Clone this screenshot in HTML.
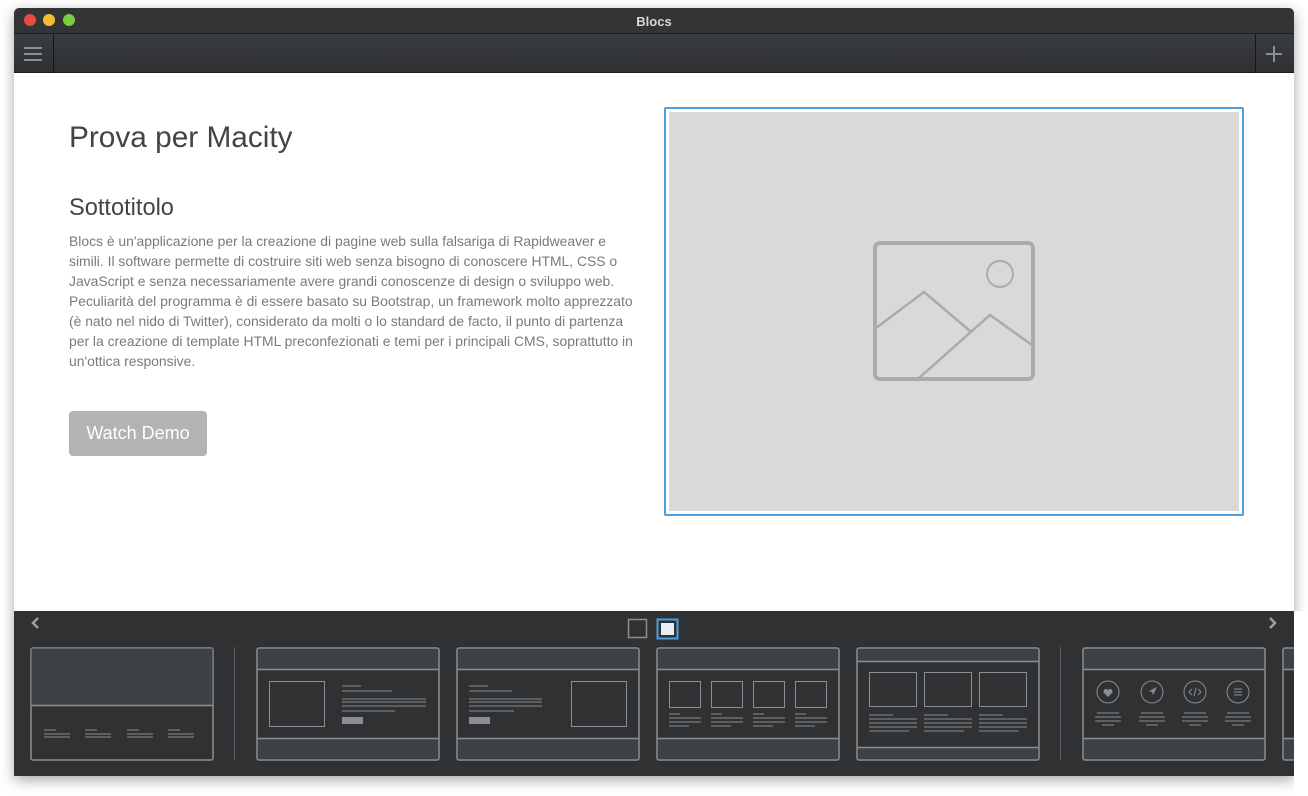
<!DOCTYPE html>
<html><head><meta charset="utf-8"><style>
*{margin:0;padding:0;box-sizing:border-box}
body{width:1308px;height:796px;background:#fff;position:relative;overflow:hidden;font-family:"Liberation Sans",Arial,sans-serif}
.abs{position:absolute}
</style></head><body>
<div class="abs" style="left:14px;top:8px;width:1280px;height:768px;box-shadow:0 4px 14px rgba(0,0,0,.35);border-radius:5px 5px 0 0;background:#fff"></div>
<div class="abs" style="left:14px;top:8px;width:1280px;height:26px;background:#323435;border-radius:5px 5px 0 0;border-bottom:1px solid #1d1e1f"></div>
<div class="abs" style="left:24px;top:14px;width:12px;height:12px;border-radius:50%;background:#e9493f"></div>
<div class="abs" style="left:43px;top:14px;width:12px;height:12px;border-radius:50%;background:#f2be2d"></div>
<div class="abs" style="left:63px;top:14px;width:12px;height:12px;border-radius:50%;background:#77ce3e"></div>
<div class="abs" style="left:14px;top:14px;width:1280px;text-align:center;color:#d8d8d8;font-size:13px;font-weight:bold">Blocs</div>
<div class="abs" style="left:14px;top:34px;width:1280px;height:39px;background:linear-gradient(#3a3d40,#2e3033);border-bottom:1px solid #1c1d1e"></div>
<div class="abs" style="left:53px;top:34px;width:1px;height:39px;background:#151617"></div>
<div class="abs" style="left:1255px;top:34px;width:1px;height:39px;background:#151617"></div>
<div class="abs" style="left:24px;top:47px;width:18px;height:2px;background:#8a8f95;box-shadow:0 6px 0 #8a8f95,0 12px 0 #8a8f95"></div>
<div class="abs" style="left:1266px;top:53px;width:16px;height:2px;background:#8a8f95"></div>
<div class="abs" style="left:1273px;top:46px;width:2px;height:16px;background:#8a8f95"></div>

<div class="abs" style="left:69px;top:121px;font-size:29.8px;color:#444">Prova per Macity</div>
<div class="abs" style="left:69px;top:195px;font-size:23.6px;color:#444">Sottotitolo</div>
<div class="abs" style="left:69px;top:231px;font-size:13.9px;line-height:20px;color:#7a7a7a;white-space:nowrap">Blocs è un'applicazione per la creazione di pagine web sulla falsariga di Rapidweaver e<br>simili. Il software permette di costruire siti web senza bisogno di conoscere HTML, CSS o<br>JavaScript e senza necessariamente avere grandi conoscenze di design o sviluppo web.<br>Peculiarità del programma è di essere basato su Bootstrap, un framework molto apprezzato<br>(è nato nel nido di Twitter), considerato da molti o lo standard de facto, il punto di partenza<br>per la creazione di template HTML preconfezionati e temi per i principali CMS, soprattutto in<br>un'ottica responsive.</div>
<div class="abs" style="left:69px;top:411px;width:138px;height:45px;background:#b3b3b3;border-radius:4px;color:#fff;font-size:18px;line-height:45px;text-align:center">Watch Demo</div>

<div class="abs" style="left:664px;top:107px;width:580px;height:409px;border:2px solid #4a9fe0;border-radius:2px;background:#fff"></div>
<div class="abs" style="left:669px;top:112px;width:570px;height:399px;background:#d9d9d9"></div>
<svg class="abs" style="left:0;top:0" width="1308" height="796">
<g fill="none" stroke="#ababab" stroke-width="3">
<rect x="875" y="243" width="158" height="136" rx="5" stroke-width="4"/>
<circle cx="1000" cy="274" r="13" stroke-width="2"/>
<polyline points="876,328 924,292 970,331" stroke-width="2.5"/>
<polyline points="919,378 990,315 1032,345" stroke-width="2.5"/>
</g>
</svg>

<div class="abs" style="left:14px;top:611px;width:1280px;height:165px;background:#2f3132"></div>
<svg class="abs" style="left:0;top:0" width="1308" height="796">
<polyline points="38,618 33,623 38,628" fill="none" stroke="#9aa0a6" stroke-width="2.5"/>
<polyline points="1270,618 1275,623 1270,628" fill="none" stroke="#9aa0a6" stroke-width="2.5"/>
<rect x="628.5" y="619.5" width="18" height="18" fill="none" stroke="#8a8f94" stroke-width="1.5"/>
<rect x="657.5" y="619.5" width="20" height="19" fill="none" stroke="#4a9fe0" stroke-width="2"/>
<rect x="661" y="623" width="13" height="12" fill="#e8eef6"/>
<line x1="234.5" y1="647" x2="234.5" y2="760" stroke="#5a5e62"/>
<line x1="1060.5" y1="647" x2="1060.5" y2="760" stroke="#5a5e62"/>
<g stroke="#8b8f93" stroke-width="1.5" fill="none">
<rect x="31" y="648" width="182" height="112" rx="2" fill="#2f3132"/>
<rect x="31.5" y="648.5" width="181" height="57" fill="#3f4245" stroke="none"/>
<line x1="31" y1="705.5" x2="213" y2="705.5"/>
<g stroke-width="1"><path d="M44 730h12M44 734h26M44 737h26M85 730h12M85 734h26M85 737h26M127 730h12M127 734h26M127 737h26M168 730h12M168 734h26M168 737h26"/></g>
<rect x="257" y="648" width="182" height="112" rx="2" fill="#2f3132"/>
<rect x="258" y="649" width="180" height="20" fill="#3f4245" stroke="none"/>
<rect x="258" y="739" width="180" height="20" fill="#3f4245" stroke="none"/>
<path d="M257 669.5h182M257 738.5h182"/>
<rect x="269.5" y="681.5" width="55" height="45" stroke-width="1"/>
<g stroke-width="1"><path d="M342 686h19M342 691h50M342 699h84M342 702h84M342 706h84M342 711h53"/></g>
<rect x="342" y="717" width="21" height="7" fill="#8b8f93" stroke="none"/>
<rect x="457" y="648" width="182" height="112" rx="2" fill="#2f3132"/>
<rect x="458" y="649" width="180" height="20" fill="#3f4245" stroke="none"/>
<rect x="458" y="739" width="180" height="20" fill="#3f4245" stroke="none"/>
<path d="M457 669.5h182M457 738.5h182"/>
<rect x="571.5" y="681.5" width="55" height="45" stroke-width="1"/>
<g stroke-width="1"><path d="M469 686h19M469 691h43M469 699h73M469 702h73M469 706h73M469 711h45"/></g>
<rect x="469" y="717" width="21" height="7" fill="#8b8f93" stroke="none"/>
<rect x="657" y="648" width="182" height="112" rx="2" fill="#2f3132"/>
<rect x="658" y="649" width="180" height="20" fill="#3f4245" stroke="none"/>
<rect x="658" y="739" width="180" height="20" fill="#3f4245" stroke="none"/>
<path d="M657 669.5h182M657 738.5h182"/>
<g stroke-width="1">
<rect x="669.5" y="681.5" width="31" height="26"/><rect x="711.5" y="681.5" width="31" height="26"/><rect x="753.5" y="681.5" width="31" height="26"/><rect x="795.5" y="681.5" width="31" height="26"/>
<path d="M669 714h11M669 718h32M669 722h32M669 726h20M711 714h11M711 718h32M711 722h32M711 726h20M753 714h11M753 718h32M753 722h32M753 726h20M795 714h11M795 718h32M795 722h32M795 726h20"/>
</g>
<rect x="857" y="648" width="182" height="112" rx="2" fill="#2f3132"/>
<rect x="858" y="649" width="180" height="12" fill="#3f4245" stroke="none"/>
<rect x="858" y="748" width="180" height="11" fill="#3f4245" stroke="none"/>
<path d="M857 661.5h182M857 747.5h182"/>
<g stroke-width="1">
<rect x="869.5" y="672.5" width="47" height="34"/><rect x="924.5" y="672.5" width="47" height="34"/><rect x="979.5" y="672.5" width="47" height="34"/>
<path d="M869 715h24M869 719h48M869 723h48M869 727h48M869 731h40M924 715h24M924 719h48M924 723h48M924 727h48M924 731h40M979 715h24M979 719h48M979 723h48M979 727h48M979 731h40"/>
</g>
<rect x="1083" y="648" width="182" height="112" rx="2" fill="#2f3132"/>
<rect x="1084" y="649" width="180" height="20" fill="#3f4245" stroke="none"/>
<rect x="1084" y="739" width="180" height="20" fill="#3f4245" stroke="none"/>
<path d="M1083 669.5h182M1083 738.5h182"/>
<g stroke-width="1">
<circle cx="1108" cy="692" r="11"/><circle cx="1152" cy="692" r="11"/><circle cx="1195" cy="692" r="11"/><circle cx="1238" cy="692" r="11"/>
<path d="M1097 713h22M1095 717h26M1095 721h26M1102 725h12M1141 713h22M1139 717h26M1139 721h26M1146 725h12M1184 713h22M1182 717h26M1182 721h26M1189 725h12M1227 713h22M1225 717h26M1225 721h26M1232 725h12"/>
<path d="M1234 689h8M1234 692h8M1234 695h8"/>
<path d="M1192 689l-3 3 3 3M1198 689l3 3-3 3M1196 688l-2 8"/>
</g>
<path d="M1108 697l-4-4a2.3 2.3 0 0 1 4-3 2.3 2.3 0 0 1 4 3z" fill="#8b8f93" stroke="none"/>
<path d="M1157 687l-8 4 3 1 1 3z" fill="#8b8f93" stroke="none"/>
<rect x="1283" y="648" width="30" height="112" rx="2" fill="#2f3132"/>
<rect x="1284" y="649" width="10" height="20" fill="#3f4245" stroke="none"/>
<rect x="1284" y="739" width="10" height="20" fill="#3f4245" stroke="none"/>
<path d="M1283 669.5h11M1283 738.5h11"/>
</g>
</svg>
<div class="abs" style="left:1294px;top:611px;width:14px;height:185px;background:#fff"></div>
</body></html>
